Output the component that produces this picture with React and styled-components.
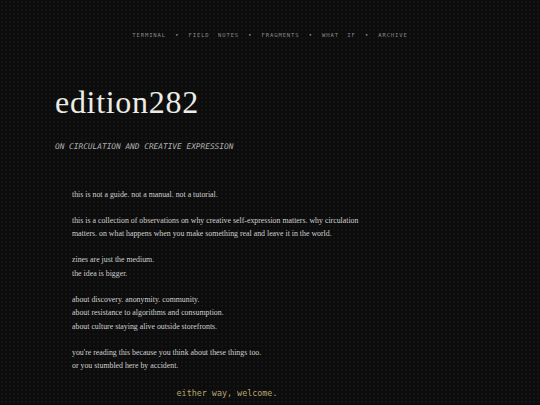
import React from "react";
import styled, { createGlobalStyle } from "styled-components";

const Global = createGlobalStyle`
  html, body { margin: 0; padding: 0; }
  body {
    background-color: #0c0c0c;
    background-image: radial-gradient(rgba(255,255,255,0.03) 1px, transparent 1px);
    background-size: 4px 4px;
    min-height: 405px;
    overflow: hidden;
  }
`;

const Page = styled.div`
  width: 540px;
  height: 405px;
  box-sizing: border-box;
  padding: 30px 0 0 55px;
  display: flex;
  flex-direction: column;
`;

const Nav = styled.nav`
  display: flex;
  justify-content: center;
  align-items: center;
  margin-left: -55px;
  font-family: "DejaVu Sans Mono", monospace;
  font-size: 5.5px;
  letter-spacing: 0.9px;
  color: #8a8a8a;
  height: 10px;
`;

const NavItem = styled.span`
  white-space: pre;
`;

const Sep = styled.span`
  margin: 0 9px;
  color: #888;
  font-size: 6px;
  line-height: 1;
`;

const Title = styled.h1`
  margin: 45px 0 0 0;
  font-family: "Liberation Serif", serif;
  font-weight: 400;
  font-size: 32px;
  line-height: 34px;
  letter-spacing: 0.7px;
  color: #ecebe4;
`;

const Subtitle = styled.p`
  margin: 23px 0 0 0;
  font-family: "DejaVu Sans Mono", monospace;
  font-style: italic;
  font-size: 7.8px;
  color: #b0b0b0;
`;

const Body = styled.div`
  margin: 37px 0 0 17px;
  width: 310px;
  font-family: "Liberation Serif", serif;
  font-size: 7.85px;
  line-height: 13.4px;
  color: #d0d0d0;
`;

const Para = styled.p`
  margin: 0 0 12.6px 0;
`;

const Welcome = styled.p`
  margin: 15px 0 0 0;
  text-align: center;
  font-family: "DejaVu Sans Mono", monospace;
  font-size: 8.4px;
  color: #b9a56f;
`;

const navItems = ["TERMINAL", "FIELD  NOTES", "FRAGMENTS", "WHAT  IF", "ARCHIVE"];

export default function App() {
  return (
    <>
      <Global />
      <Page>
        <Nav>
          {navItems.map((n, i) => (
            <React.Fragment key={n}>
              {i > 0 && <Sep>•</Sep>}
              <NavItem>{n}</NavItem>
            </React.Fragment>
          ))}
        </Nav>
        <Title>edition282</Title>
        <Subtitle>ON CIRCULATION AND CREATIVE EXPRESSION</Subtitle>
        <Body>
          <Para>this is not a guide. not a manual. not a tutorial.</Para>
          <Para>
            this is a collection of observations on why creative self-expression matters. why circulation
            matters. on what happens when you make something real and leave it in the world.
          </Para>
          <Para>
            zines are just the medium.
            <br />
            the idea is bigger.
          </Para>
          <Para>
            about discovery. anonymity. community.
            <br />
            about resistance to algorithms and consumption.
            <br />
            about culture staying alive outside storefronts.
          </Para>
          <Para>
            you're reading this because you think about these things too.
            <br />
            or you stumbled here by accident.
          </Para>
          <Welcome>either way, welcome.</Welcome>
        </Body>
      </Page>
    </>
  );
}
